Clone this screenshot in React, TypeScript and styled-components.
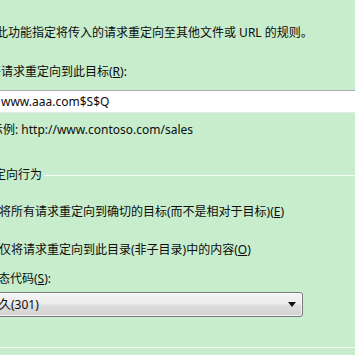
import React from "react";
import styled, { createGlobalStyle } from "styled-components";

const Global = createGlobalStyle`
  html, body {
    margin: 0;
    padding: 0;
    background: #c7edcc;
    overflow: hidden;
  }
  body {
    font-family: "Noto Sans", "Noto Sans CJK SC", sans-serif;
    font-size: 12px;
    color: #0c0c0c;
  }
`;

const Page = styled.div`
  width: 420px;
  height: 355px;
  margin-left: -24px;
  padding-top: 25px;
  box-sizing: border-box;
  display: flex;
  flex-direction: column;
`;

const Text = styled.div<{ $indent?: number; $top?: number }>`
  line-height: 16px;
  white-space: nowrap;
  margin-left: ${(p) => p.$indent ?? 0}px;
  margin-top: ${(p) => p.$top ?? 0}px;
`;

const Key = styled.span`
  text-decoration: underline;
  text-underline-offset: 1px;
`;

const CheckRow = styled.label`
  display: flex;
  align-items: center;
  gap: 0;
  margin-top: 23px;
  line-height: 16px;
  white-space: nowrap;
`;

const CheckBox = styled.span`
  width: 13px;
  height: 13px;
  box-sizing: border-box;
  border: 1px solid #8f8f8f;
  background: #fff;
  flex: none;
`;

const TextInput = styled.input`
  margin-left: 15px;
  margin-top: 10px;
  width: 400px;
  height: 23px;
  box-sizing: border-box;
  border: 1px solid;
  border-color: #a9abb0 #e2e3ea #e3e9ef #e2e3ea;
  background: #fff;
  padding: 0 0 0 9px;
  font-family: "Noto Sans", "Noto Sans CJK SC", sans-serif;
  font-size: 12px;
  color: #0c0c0c;
  outline: none;
`;

const GroupHeader = styled.div`
  display: flex;
  align-items: center;
  gap: 2px;
  margin-left: 6px;
  margin-top: 29px;
  line-height: 16px;
  white-space: nowrap;
`;

const Rule = styled.div`
  flex: 1;
  height: 1px;
  background: #f3fbf3;
`;

const RadioRow = styled.label<{ $top: number }>`
  display: flex;
  align-items: center;
  gap: 4px;
  margin-left: 6px;
  margin-top: ${(p) => p.$top}px;
  line-height: 16px;
  white-space: nowrap;
`;

const Radio = styled.span`
  width: 13px;
  height: 13px;
  box-sizing: border-box;
  border: 1px solid #8f8f8f;
  border-radius: 50%;
  background: #fff;
  flex: none;
`;

const Select = styled.div`
  margin-left: 6px;
  margin-top: 5px;
  width: 321px;
  height: 25px;
  box-sizing: border-box;
  border: 1px solid #7a7a7a;
  border-radius: 3px;
  background: linear-gradient(#f4f4f4 0%, #ececec 48%, #dedede 52%, #d2d2d2 100%);
  box-shadow: inset 0 0 0 1px rgba(255, 255, 255, 0.7);
  display: flex;
  align-items: center;
  justify-content: space-between;
  padding: 0 6px 0 4px;
  white-space: nowrap;
  line-height: 16px;
`;

const Divider = styled.div`
  margin-top: 30px;
  height: 1px;
  background: #eef9ef;
  box-shadow: 0 -5px 6px rgba(255, 255, 255, 0.12);
`;

export default function App() {
  return (
    <>
      <Global />
      <Page>
        <Text $indent={-4}>使用此功能指定将传入的请求重定向至其他文件或 URL 的规则。</Text>
        <CheckRow>
          <CheckBox />
          <span>
            将请求重定向到此目标(<Key>R</Key>):
          </span>
        </CheckRow>
        <TextInput readOnly value="www.aaa.com$S$Q" />
        <Text $indent={15} $top={9}>
          示例: http://www.contoso.com/sales
        </Text>
        <GroupHeader>
          <span>重定向行为</span>
          <Rule />
        </GroupHeader>
        <RadioRow $top={21}>
          <Radio />
          <span>
            将所有请求重定向到确切的目标(而不是相对于目标)(<Key>E</Key>)
          </span>
        </RadioRow>
        <RadioRow $top={22}>
          <Radio />
          <span>
            仅将请求重定向到此目录(非子目录)中的内容(<Key>O</Key>)
          </span>
        </RadioRow>
        <Text $indent={10} $top={13}>
          状态代码(<Key>S</Key>):
        </Text>
        <Select>
          <span>永久(301)</span>
          <svg width="8" height="5" viewBox="0 0 8 5">
            <polygon points="0,0 8,0 4,5" fill="#111" />
          </svg>
        </Select>
        <Divider />
      </Page>
    </>
  );
}
